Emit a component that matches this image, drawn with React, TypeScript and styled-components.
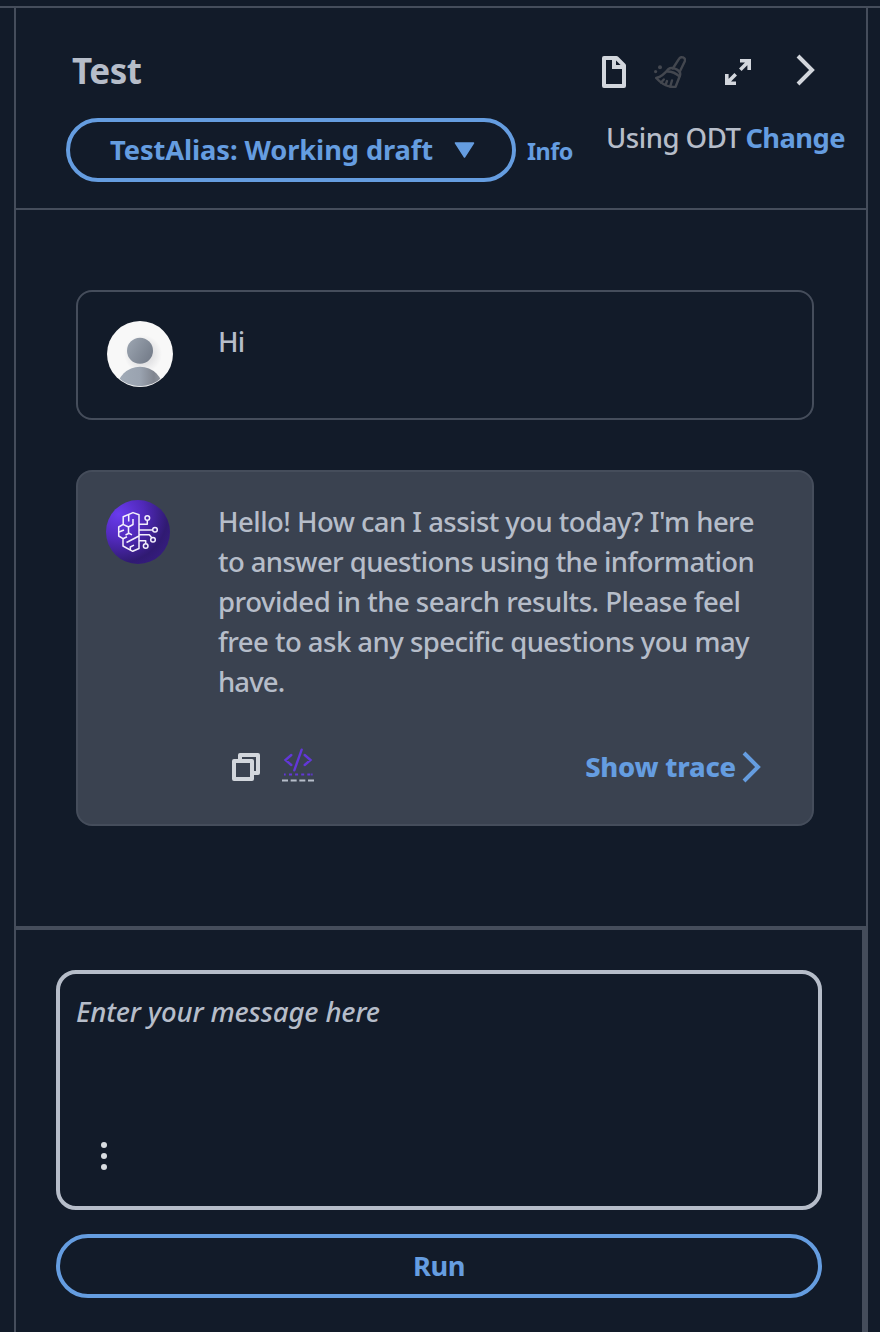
import React from "react";
import styled, { createGlobalStyle } from "styled-components";

const c = {
  bg: "#121b29",
  line: "#454d5b",
  text: "#b6bdc9",
  icon: "#d2d6dc",
  blue: "#659de0",
  card: "#3a4250",
};

const Global = createGlobalStyle`
  * { box-sizing: border-box; }
  body { margin: 0; background: ${c.bg}; color: ${c.text}; font-family: "Noto Sans", sans-serif; font-size: 27.5px; font-weight: 500; line-height: 40px; }
  svg { display: block; flex: none; }
  button { font: inherit; background: none; padding: 0; border: 0; cursor: pointer; }
`;

const Page = styled.div`
  height: 1332px;
  overflow: hidden;
  padding-top: 6px;
  display: flex;
  flex-direction: column;
`;
const Panel = styled.section`
  border-top: 2px solid ${c.line};
  padding: 0 12px 0 14px;
  flex: 1;
  display: flex;
`;
const PanelBody = styled.div`
  flex: 1;
  min-width: 0;
  border: solid ${c.line};
  border-width: 0 2px;
  display: flex;
  flex-direction: column;
`;
const Header = styled.header`
  height: 202px;
  border-bottom: 2px solid ${c.line};
  display: flex;
  justify-content: space-between;
  padding: 43px 21px 0 50px;
`;
const Left = styled.div`
  display: flex;
  flex-direction: column;
`;
const Right = styled.div`
  display: flex;
  flex-direction: column;
`;
const Text = styled.span<{ $ls?: number }>`
  letter-spacing: ${(p) => p.$ls ?? 0}px;
  white-space: nowrap;
`;
const Title = styled.h2`
  margin: 0 0 27px 6px;
  font-size: 35px;
  font-weight: 700;
  line-height: 40px;
`;
const AliasRow = styled.div`
  display: flex;
  align-items: center;
  gap: 11px;
`;
const AliasButton = styled.button`
  width: 450px;
  height: 64px;
  border: 4px solid ${c.blue};
  border-radius: 32px;
  color: ${c.blue};
  font-size: 27.3px;
  font-weight: 700;
  display: flex;
  align-items: center;
  justify-content: space-between;
  padding: 0 37px 0 40px;
`;
const Info = styled.a`
  color: ${c.blue};
  font-size: 23.4px;
  font-weight: 700;
  padding-top: 2px;
`;
const Tools = styled.div`
  display: flex;
  height: 42px;
  padding-right: 29px;
  align-items: center;
`;
const Tool = styled.button<{ $gap?: number; $up?: number }>`
  margin-left: ${(p) => p.$gap ?? 0}px;
  padding-bottom: ${(p) => p.$up ?? 0}px;
`;
const Mode = styled.div`
  display: flex;
  justify-content: flex-end;
  gap: 5px;
  margin-top: 25px;
`;
const Link = styled.a`
  color: ${c.blue};
  font-size: 27.3px;
  font-weight: 700;
`;
const Messages = styled.div`
  height: 716px;
  padding: 80px 52px 0 60px;
  display: flex;
  flex-direction: column;
  gap: 50px;
`;
const Card = styled.article<{ $filled?: boolean }>`
  height: ${(p) => (p.$filled ? 356 : 130)}px;
  border: 2px solid ${c.line};
  border-radius: 16px;
  background: ${(p) => (p.$filled ? c.card : "transparent")};
  display: flex;
  padding: 28px 50px 0 28px;
`;
const AvatarCell = styled.div<{ $top?: number }>`
  width: 112px;
  flex: none;
  padding-top: ${(p) => p.$top ?? 0}px;
`;
const Content = styled.div`
  flex: 1;
  min-width: 0;
  padding-top: 2px;
  display: flex;
  flex-direction: column;
`;
const Actions = styled.div`
  display: flex;
  align-items: center;
  margin-top: 45px;
  padding-left: 14px;
`;
const TraceLink = styled(Link)`
  margin-left: auto;
  display: flex;
  align-items: center;
  gap: 6px;
  font-weight: 800;
`;
const CodeButton = styled.button`
  margin: -5px 0 0 22px;
`;
const Composer = styled.form`
  flex: 1;
  border: solid ${c.line};
  border-width: 4px 4px 0 0;
  padding: 40px 40px 0;
  display: flex;
  flex-direction: column;
  gap: 24px;
`;
const Input = styled.div`
  height: 240px;
  border: 4px solid ${c.text};
  border-radius: 20px;
  padding: 18px 16px 36px;
  display: flex;
  flex-direction: column;
  justify-content: space-between;
  font-style: italic;
`;
const More = styled.button`
  align-self: flex-start;
  margin-left: 25px;
`;
const Run = styled.button`
  height: 64px;
  border: 4px solid ${c.blue};
  border-radius: 32px;
  color: ${c.blue};
  font-size: 27.3px;
  font-weight: 700;
`;

const FileIcon = () => (
  <svg width="24" height="32" viewBox="0 0 24 32" fill="none" stroke={c.icon} strokeWidth="4" strokeLinejoin="round">
    <path d="M2 2H14.5L22 9.5V30H2Z" />
    <path d="M12 2V11H22" strokeLinejoin="miter" />
  </svg>
);
const BroomIcon = () => (
  <svg width="32" height="32" viewBox="0 0 32 32" fill="none" stroke="#43474f" strokeWidth="2.4" strokeLinejoin="round" strokeLinecap="round">
    <path d="M18.8 12.5L25 2.8C26.8-.2 32 1.5 30.8 5.2L25.6 16" />
    <path d="M14.2 13.2C17 11.2 20 12 23 13.6C26 15.3 27 17 25.8 20L21.6 30.8C15 31.5 8 28.5 2.2 22C7.5 20.5 11 17.5 14.2 13.2Z" />
    <path d="M13.5 15.5C18 15.5 22 17.2 25.5 20.5M7 26.5L9.8 23.5M11.5 29L13 25M16.2 30.5L18 24.5" />
    <g fill="#43474f" stroke="none"><circle cx="6" cy="11.3" r="2" /><circle cx="1.6" cy="15.6" r="1.6" /></g>
  </svg>
);
const ExpandIcon = () => (
  <svg width="26" height="26" viewBox="0 0 26 26" fill="none" stroke={c.icon} strokeWidth="3.6">
    <path d="M15 1.8H24.2V11M15.3 10.7L23.5 2.5M11 24.2H1.8V15M10.7 15.3L2.5 23.5" />
  </svg>
);
const Chevron = ({ color }: { color: string }) => (
  <svg width="20" height="32" viewBox="0 0 20 32" fill="none" stroke={color} strokeWidth="4">
    <path d="M2 2L16 16L2 30" />
  </svg>
);
const UserAvatar = () => (
  <svg width="68" height="66" viewBox="-1 0 68 66">
    <defs>
      <linearGradient id="head" x1="0" y1=".2" x2="1" y2=".8"><stop stopColor="#9aa3af" /><stop offset="1" stopColor="#737b88" /></linearGradient>
      <linearGradient id="body"><stop stopColor="#a2acb8" /><stop offset=".5" stopColor="#9aa3b0" /><stop offset=".8" stopColor="#80858f" /><stop offset="1" stopColor="#979ca5" /></linearGradient>
      <radialGradient id="shade"><stop offset=".5" stopColor="#e2e2e4" /><stop offset="1" stopColor="#f8f8f8" /></radialGradient>
      <clipPath id="disc"><circle cx="33" cy="33" r="32.2" /></clipPath>
    </defs>
    <circle cx="33" cy="33" r="33" fill="#f8f8f8" />
    <circle cx="36" cy="33" r="19" fill="url(#shade)" />
    <circle cx="33" cy="29.7" r="13" fill="url(#head)" />
    <circle cx="33" cy="69" r="23.3" fill="url(#body)" clipPath="url(#disc)" />
  </svg>
);
const BotAvatar = () => (
  <svg width="64" height="64" viewBox="0 0 64 64" fill="none" stroke="#f3effc" strokeWidth="1.5" strokeLinejoin="round">
    <defs>
      <radialGradient id="bot" cx=".2" cy=".22" r=".9"><stop stopColor="#6a3bee" /><stop offset=".45" stopColor="#5029b9" /><stop offset=".85" stopColor="#301a72" /><stop offset="1" stopColor="#341c7c" /></radialGradient>
    </defs>
    <circle cx="32" cy="32" r="32" fill="url(#bot)" stroke="none" />
    <path d="M33 14.8L27 12.6L17.2 16.7V24.3L12.7 27V36L17 38.7V46L26.7 51.3L33 48.5Z" />
    <path d="M22.7 14.5V21.5M27 19V24.5L22.5 27V33.5L19.5 35M17 24.3L22.5 27M22.5 33L26 34.8M13 32L18 30M17 38.7L21 36.8M20.5 42.5L33 36M24.3 50V47L28 45.2" />
    <path d="M33 24.3H41.3V20.5M33 30H46.5M33 34.7H43.3L45.8 37.8M33 40.7H39.7V43.5" />
    <circle cx="41.3" cy="18" r="2.3" /><circle cx="49" cy="29.8" r="2.3" /><circle cx="47" cy="39.7" r="2.3" /><circle cx="39.7" cy="46" r="2.3" />
  </svg>
);
const CopyIcon = () => (
  <svg width="28" height="28" viewBox="0 0 28 28" fill="none" stroke={c.icon} strokeWidth="4" strokeLinejoin="round">
    <path d="M8 7V2H26V20H21" /><rect x="2" y="8" width="18" height="18" />
  </svg>
);
const CodeIcon = () => (
  <svg width="32" height="36" viewBox="0 0 32 36" fill="none" stroke="#6237d8" strokeWidth="2.4">
    <path d="M9.3 8L3.5 13L9.3 18M19.7 2.7L12.3 23.3M22.7 8L28.5 13L22.7 18" strokeLinecap="round" />
    <path d="M2 27.5H3.7M7 27.500H28.400" strokeWidth="2" strokeDasharray="3 3.1" />
    <path d="M29.200 27.500H30.600" strokeWidth="2" />
    <path d="M0 33.500H32" stroke={c.text} strokeWidth="2" strokeDasharray="6 2.667" />
  </svg>
);

const reply: [string, number][] = [
  ["Hello! How can I assist you today? I'm here", -0.54],
  ["to answer questions using the information", -0.59],
  ["provided in the search results. Please feel", -0.5],
  ["free to ask any specific questions you may", -0.53],
  ["have.", -0.9],
];

export default function App() {
  return (
    <>
      <Global />
      <Page>
        <Panel>
          <PanelBody>
            <Header>
              <Left>
                <Title><Text $ls={-0.5}>Test</Text></Title>
                <AliasRow>
                  <AliasButton>
                    <Text $ls={-0.11}>TestAlias: Working draft</Text>
                    <svg width="21" height="16" viewBox="0 0 21 16"><path d="M1.5 1H19.5L10.5 15Z" fill={c.blue} stroke={c.blue} strokeWidth="1.5" strokeLinejoin="round" /></svg>
                  </AliasButton>
                  <Info><Text $ls={-0.5}>Info</Text></Info>
                </AliasRow>
              </Left>
              <Right>
                <Tools>
                  <Tool aria-label="Notes"><FileIcon /></Tool>
                  <Tool $gap={28} aria-label="Clear" disabled><BroomIcon /></Tool>
                  <Tool $gap={39} aria-label="Expand"><ExpandIcon /></Tool>
                  <Tool $gap={45} $up={5} aria-label="Collapse"><Chevron color={c.icon} /></Tool>
                </Tools>
                <Mode>
                  <Text $ls={-0.5}>Using ODT</Text>
                  <Link><Text $ls={-0.55}>Change</Text></Link>
                </Mode>
              </Right>
            </Header>
            <Messages>
              <Card>
                <AvatarCell $top={1}><UserAvatar /></AvatarCell>
                <Content><Text $ls={-0.8}>Hi</Text></Content>
              </Card>
              <Card $filled>
                <AvatarCell><BotAvatar /></AvatarCell>
                <Content>
                  {reply.map(([line, ls]) => <Text key={line} $ls={ls}>{line}</Text>)}
                  <Actions>
                    <button aria-label="Copy"><CopyIcon /></button>
                    <CodeButton aria-label="Code"><CodeIcon /></CodeButton>
                    <TraceLink><Text $ls={-0.2}>Show trace</Text><Chevron color={c.blue} /></TraceLink>
                  </Actions>
                </Content>
              </Card>
            </Messages>
            <Composer>
              <Input>
                <Text $ls={-0.15}>Enter your message here</Text>
                <More type="button" aria-label="More">
                  <svg width="6" height="28" viewBox="0 0 6 28" fill="#d9dde1"><circle cx="3" cy="3" r="3" /><circle cx="3" cy="14" r="3" /><circle cx="3" cy="25" r="3" /></svg>
                </More>
              </Input>
              <Run type="button"><Text $ls={-0.5}>Run</Text></Run>
            </Composer>
          </PanelBody>
        </Panel>
      </Page>
    </>
  );
}
